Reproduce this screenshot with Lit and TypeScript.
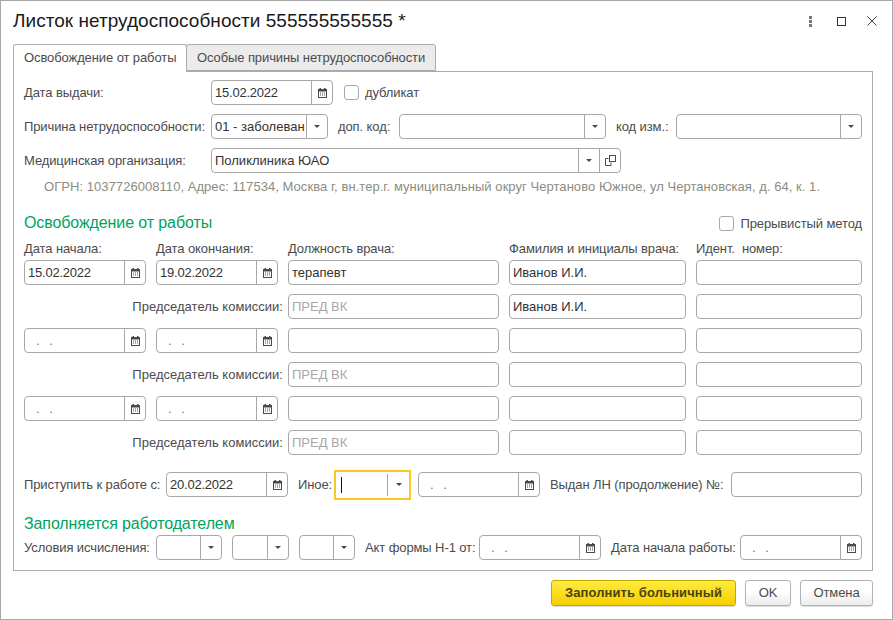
import { LitElement, html, css, svg } from "lit";
import { customElement } from "lit/decorators.js";

const calIcon = html`<svg class="ico" width="9" height="10" viewBox="0 0 9 10"><path fill="#4a4a4a" d="M0 1h1.500V0H3v1h3V0h1.500v1H9v9H0z"/><path fill="#fff" d="M1 3.500h7V9H1z"/><path fill="#4a4a4a" d="M2 4.500h1v1H2zM4 4.500h1v1H4zM6 4.500h1v1H6zM2 6.500h1v1H2zM4 6.500h1v1H4zM6 6.500h1v1H6z"/></svg>`;
const arrow = html`<svg class="ico" width="6" height="3" viewBox="0 0 6 3"><path fill="#4a4a4a" d="M0 0h6L3 3z"/></svg>`;
const openIcon = svg`<rect x="4.500" y=".5" width="6" height="6" fill="none" stroke="#4a4a4a"/><path d="M3.500 3.500H.5v7h5.500V7.500" fill="none" stroke="#4a4a4a"/>`;

const wstyle = (w: number) => (w ? `width:${w}px` : "");

function field(w: number, text = "", cls = "", btns: unknown[] = []) {
  return html`<div class="f" style=${wstyle(w)}>
    <span class="v ${cls}">${text}</span>
    ${btns.map((b) => html`<span class="b">${b}</span>`)}
  </div>`;
}
const date = (w: number, text = "") =>
  html`<div class="f" style=${wstyle(w)}>
    ${text ? html`<span class="v d">${text}</span>` : html`<span class="v mask">.&nbsp;&nbsp;&nbsp;.</span>`}
    <span class="b">${calIcon}</span>
  </div>`;

@customElement("app-root")
export class AppRoot extends LitElement {
  static styles = css`
    :host {
      display: block;
      width: 893px;
      height: 620px;
      box-sizing: border-box;
      border: 1px solid #a8a8a8;
      background: #fff;
      font: 13px "Liberation Sans", Arial, sans-serif;
      letter-spacing: -0.1px;
      color: #4b4b4b;
      overflow: hidden;
    }
    .head {
      display: flex;
      align-items: center;
      height: 43px;
      padding: 0 3px 0 12px;
    }
    .title {
      flex: 1;
      font-size: 19px;
      letter-spacing: 0.03px;
      color: #1a1a1a;
      margin-top: -3px;
    }
    .wbtns {
      display: flex;
      align-items: center;
      gap: 21px;
      margin-top: -3px;
      padding-right: 12px;
    }
    .dots {
      margin-right: 4px;
    }
    .tabs {
      display: flex;
      margin-left: 12px;
      height: 27px;
      position: relative;
      z-index: 1;
    }
    .tab {
      box-sizing: border-box;
      border: 1px solid #ababab;
      border-radius: 3px 3px 0 0;
      padding: 0 10px;
      line-height: 25px;
      white-space: nowrap;
      color: #4b4b4b;
    }
    .tab.on {
      width: 174px;
      border-bottom: 0;
      background: #fff;
      height: 28px;
    }
    .tab.off {
      width: 250px;
      margin-left: -1px;
      background: #ebebeb;
    }
    .panel {
      box-sizing: border-box;
      margin-left: 12px;
      width: 860px;
      height: 500px;
      border: 1px solid #ababab;
      padding: 8px 10px 8px;
      display: flex;
      flex-direction: column;
    }
    .row {
      display: flex;
      align-items: center;
      height: 25px;
      margin-bottom: 9px;
    }
    .lab {
      flex: none;
      white-space: nowrap;
    }
    .f {
      flex: none;
      box-sizing: border-box;
      height: 25px;
      min-width: 0;
      border: 1px solid #a8a8a8;
      border-radius: 4px;
      display: flex;
      background: #fff;
      color: #333;
    }
    .v {
      flex: 1;
      min-width: 0;
      overflow: hidden;
      white-space: nowrap;
      line-height: 23px;
      padding-left: 3px;
      letter-spacing: 0;
    }
    .d {
      letter-spacing: -0.22px;
    }
    .mask {
      padding-left: 11px;
      color: #5a7a90;
      letter-spacing: -0.3px;
    }
    .ph {
      color: #a8a8a8;
    }
    .b {
      flex: none;
      width: 20px;
      border-left: 1px solid #a8a8a8;
      display: flex;
      align-items: center;
      justify-content: center;
    }
    .hint {
      margin: -3px 0 0 20px;
      height: 16px;
      line-height: 16px;
      color: #8c8c80;
      letter-spacing: 0.05px;
      white-space: nowrap;
    }
    .chk {
      flex: none;
      box-sizing: border-box;
      width: 15px;
      height: 15px;
      border: 1px solid #a8a8a8;
      border-radius: 3px;
    }
    .sec {
      display: flex;
      align-items: center;
      justify-content: space-between;
      height: 20px;
      margin-top: 18px;
      font-size: 16px;
      letter-spacing: -0.1px;
      color: #00a35c;
    }
    .sec .opt {
      display: flex;
      align-items: center;
      gap: 6px;
      font-size: 13px;
      letter-spacing: -0.1px;
      color: #4b4b4b;
    }
    .grid {
      display: grid;
      grid-template-columns: 122px 122px 211px 177px 166px;
      column-gap: 10px;
      grid-auto-rows: 25px;
      row-gap: 9px;
    }
    .grid-labs {
      display: grid;
      grid-template-columns: 122px 122px 211px 177px 166px;
      column-gap: 10px;
      height: 15px;
      line-height: 15px;
      margin: 8px 0 4px;
      white-space: pre;
    }
    .chair {
      grid-column: 1 / 3;
      text-align: right;
      line-height: 25px;
      margin-right: -5px;
      letter-spacing: 0.03px;
      white-space: nowrap;
    }
    .focus {
      flex: none;
      box-sizing: border-box;
      width: 77px;
      height: 30px;
      border: 2px solid #fcc923;
      display: flex;
      align-items: center;
      padding: 2px 0;
    }
    .focus .caret {
      width: 1px;
      height: 16px;
      background: #111;
      margin-left: 5px;
    }
    .focus .b {
      margin-left: auto;
      height: 100%;
      width: 21px;
    }
    .sec2 {
      height: 20px;
      line-height: 20px;
      margin: 17px 0 1px;
      font-size: 16px;
      letter-spacing: -0.1px;
      color: #00a35c;
    }
    .foot {
      display: flex;
      justify-content: flex-end;
      gap: 9px;
      margin: 9px 19px 0 0;
    }
    .btn {
      box-sizing: border-box;
      height: 26px;
      border: 1px solid #b3b3b3;
      border-radius: 3px;
      background: linear-gradient(#fff 40%, #ececec);
      box-shadow: 0 1px 1px rgba(0, 0, 0, 0.15);
      text-align: center;
      line-height: 24px;
      color: #4b4b4b;
    }
    .btn.pri {
      width: 185px;
      background: linear-gradient(#ffec3d, #f5cf00);
      border-color: #c4a800;
      font-weight: bold;
      letter-spacing: 0.1px;
      color: #4a4212;
    }
    .btn.ok {
      width: 46px;
    }
    .btn.cancel {
      width: 73px;
    }
    .sp7 { flex: none; width: 7px; }
    .sp10 { flex: none; width: 10px; }
    .ret { margin-top: 17px; margin-bottom: 0; }
    .last { margin-bottom: 0; }
    .ml11 { margin-left: 11px; }
    .ml6 { margin-left: 6px; }
    .ml10 { margin-left: 10px; }
    .w187 { width: 187px; }
    .w60 { width: 60px; }
    .w61 { width: 61px; }
    .w142 { width: 142px; }
    .w36 { width: 36px; }
    .w181 { width: 181px; }
    .w132 { width: 132px; }
    .w114 { width: 114px; }
    .w129 { width: 129px; }
  `;

  render() {
    const chair = (n1: string) => html`
      <div class="chair">Председатель комиссии:</div>
      ${field(0, "ПРЕД ВК", "ph")}${field(0, n1)}${field(0)}
    `;
    return html`
      <div class="head">
        <div class="title">Листок нетрудоспособности 555555555555 *</div>
        <div class="wbtns">
          <svg class="dots" width="3" height="11" viewBox="0 0 3 11"><path fill="#777" d="M0 0h3v3H0zM0 4h3v3H0zM0 8h3v3H0z"/></svg>
          <svg width="9" height="9" viewBox="0 0 9 9"><rect x=".5" y=".5" width="8" height="8" fill="none" stroke="#333"/></svg>
          <svg width="10" height="10" viewBox="0 0 10 10"><path d="M.5.500l9 9M9.500.500l-9 9" fill="none" stroke="#444"/></svg>
        </div>
      </div>
      <div class="tabs">
        <div class="tab on">Освобождение от работы</div>
        <div class="tab off">Особые причины нетрудоспособности</div>
      </div>
      <div class="panel">
        <div class="row">
          <div class="lab w187">Дата выдачи:</div>
          ${date(122, "15.02.2022")}
          <div class="chk ml11"></div>
          <div class="lab ml6">дубликат</div>
        </div>
        <div class="row">
          <div class="lab w187">Причина нетрудоспособности:</div>
          ${field(117, "01 - заболеван", "", [arrow])}
          <div class="lab w61 ml10">доп. код:</div>
          ${field(207, "", "", [arrow])}
          <div class="lab w60 ml10">код изм.:</div>
          ${field(186, "", "", [arrow])}
        </div>
        <div class="row">
          <div class="lab w187">Медицинская организация:</div>
          ${field(410, "Поликлиника ЮАО", "", [
            arrow,
            html`<svg class="ico" width="11" height="11" viewBox="0 0 11 11">${openIcon}</svg>`,
          ])}
        </div>
        <div class="hint">ОГРН: 1037726008110, Адрес: 117534, Москва г, вн.тер.г. муниципальный округ Чертаново Южное, ул Чертановская, д. 64, к. 1.</div>
        <div class="sec">
          <span>Освобождение от работы</span>
          <span class="opt"><span class="chk"></span>Прерывистый метод</span>
        </div>
        <div class="grid-labs">
          <div>Дата начала:</div>
          <div>Дата окончания:</div>
          <div>Должность врача:</div>
          <div>Фамилия и инициалы врача:</div>
          <div>Идент.  номер:</div>
        </div>
        <div class="grid">
          ${date(0, "15.02.2022")}${date(0, "19.02.2022")}${field(0, "терапевт")}${field(0, "Иванов И.И.")}${field(0)}
          ${chair("Иванов И.И.")}
          ${date(0)}${date(0)}${field(0)}${field(0)}${field(0)}
          ${chair("")}
          ${date(0)}${date(0)}${field(0)}${field(0)}${field(0)}
          ${chair("")}
        </div>
        <div class="row ret">
          <div class="lab w142">Приступить к работе с:</div>
          ${date(122, "20.02.2022")}
          <div class="lab w36 ml10">Иное:</div>
          <div class="focus"><span class="caret"></span><span class="b">${arrow}</span></div>
          <div class="sp7"></div>
          ${date(122)}
          <div class="lab w181 ml10">Выдан ЛН (продолжение) №:</div>
          ${field(131)}
        </div>
        <div class="sec2">Заполняется работодателем</div>
        <div class="row last">
          <div class="lab w132">Условия исчисления:</div>
          ${field(66, "", "", [arrow])}
          <div class="sp10"></div>
          ${field(57, "", "", [arrow])}
          <div class="sp10"></div>
          ${field(56, "", "", [arrow])}
          <div class="lab w114 ml10">Акт формы Н-1 от:</div>
          ${date(122)}
          <div class="lab w129 ml10">Дата начала работы:</div>
          ${date(122)}
        </div>
      </div>
      <div class="foot">
        <div class="btn pri">Заполнить больничный</div>
        <div class="btn ok">OK</div>
        <div class="btn cancel">Отмена</div>
      </div>
    `;
  }
}
